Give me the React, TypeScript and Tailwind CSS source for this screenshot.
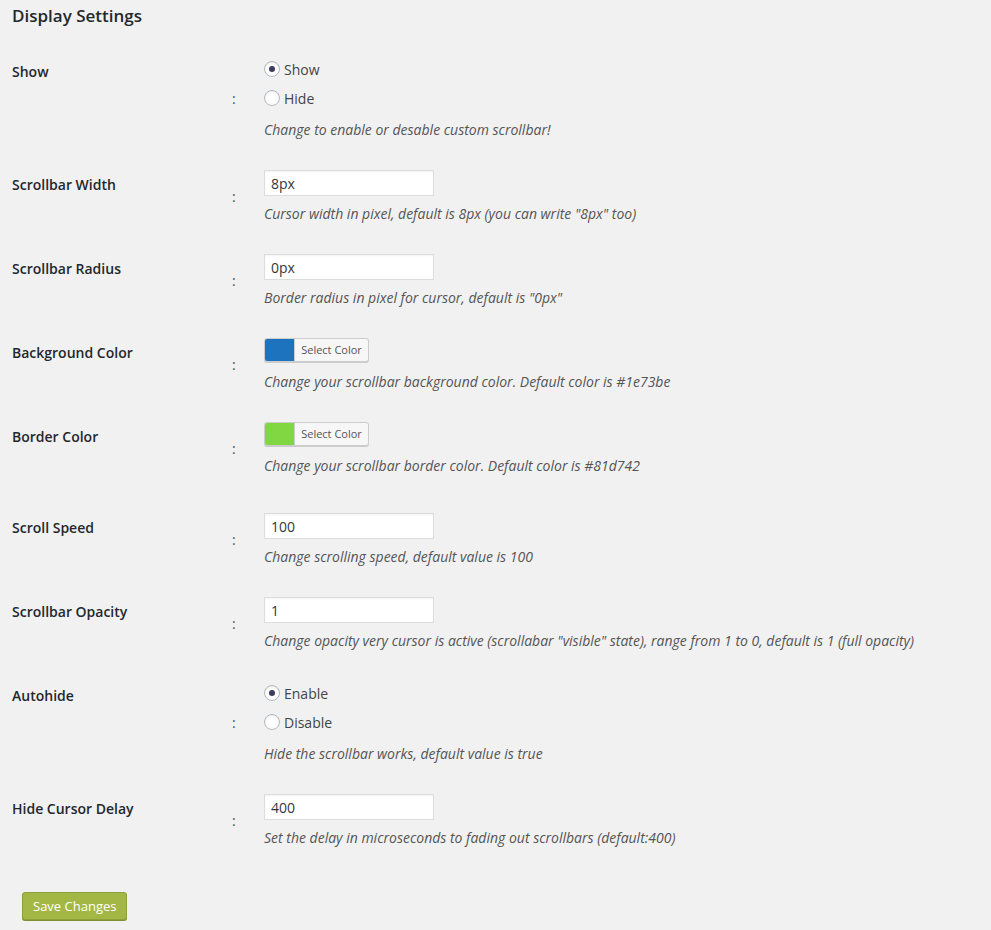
import React, { useState } from 'react';

const font = { fontFamily: '"Open Sans", "Liberation Sans", sans-serif' };

function Row({ label, children, extra = '' }: { label: string; children: React.ReactNode; extra?: string }) {
    return (
        <div className={`grid grid-cols-[210px_42px_1fr] ${extra}`}>
            <div className="pt-[20px] text-[14px] leading-[20px] font-semibold text-[#23282d]">{label}</div>
            <div className="self-center pl-[10px] text-[14px] leading-[20px] text-[#555]">:</div>
            <div className="py-[15px]">{children}</div>
        </div>
    );
}

function Desc({ children, mt }: { children: React.ReactNode; mt: string }) {
    return <p className={`${mt} text-[14px] leading-[21px] italic text-[#555]`}>{children}</p>;
}

function Radio({ checked, label, onClick }: { checked: boolean; label: string; onClick: () => void }) {
    return (
        <label onClick={onClick} className="flex h-[24px] cursor-pointer items-center gap-[4px] text-[14px] text-[#444]">
            <span className="flex h-[16px] w-[16px] items-center justify-center rounded-full border border-[#b4b9be] bg-white shadow-[inset_0_1px_2px_rgba(0,0,0,0.1)]">
                {checked && <span className="h-[6px] w-[6px] rounded-full bg-[#3f3b5c]" />}
            </span>
            {label}
        </label>
    );
}

function TextInput({ value }: { value: string }) {
    const [v, setV] = useState(value);
    return (
        <input
            value={v}
            onChange={(e) => setV(e.target.value)}
            className="block h-[26px] w-[170px] border border-[#ddd] bg-white px-[6px] text-[14px] text-[#32373c] shadow-[inset_0_1px_2px_rgba(0,0,0,0.05)] outline-none"
        />
    );
}

function ColorButton({ color }: { color: string }) {
    return (
        <button className="flex h-[24px] w-[105px] overflow-hidden rounded-[3px] border border-[#ccc] bg-[#f7f7f7] shadow-[0_1px_0_#ccc]">
            <span className="h-full w-[30px] border-r border-[#ccc]" style={{ background: color }} />
            <span className="flex-1 text-center text-[11px] leading-[22px] text-[#555]">Select Color</span>
        </button>
    );
}

export default function App() {
    const [show, setShow] = useState(true);
    const [autohide, setAutohide] = useState(true);

    return (
        <div style={font} className="min-h-[930px] w-full bg-[#f1f1f1] px-[12px]">
            <h3 className="pt-[4px] text-[17px] leading-[24px] font-semibold text-[#23282d]">Display Settings</h3>

            <div className="mt-[14px]">
                <Row label="Show">
                    <div className="flex flex-col gap-[5px]">
                        <Radio checked={show} label="Show" onClick={() => setShow(true)} />
                        <Radio checked={!show} label="Hide" onClick={() => setShow(false)} />
                    </div>
                    <Desc mt="mt-[9px]">Change to enable or desable custom scrollbar!</Desc>
                </Row>

                <Row label="Scrollbar Width">
                    <TextInput value="8px" />
                    <Desc mt="mt-[7px]">Cursor width in pixel, default is 8px (you can write "8px" too)</Desc>
                </Row>

                <Row label="Scrollbar Radius">
                    <TextInput value="0px" />
                    <Desc mt="mt-[7px]">Border radius in pixel for cursor, default is "0px"</Desc>
                </Row>

                <Row label="Background Color">
                    <ColorButton color="#1e73be" />
                    <Desc mt="mt-[9px]">Change your scrollbar background color. Default color is #1e73be</Desc>
                </Row>

                <Row label="Border Color" extra="pb-[7px]">
                    <ColorButton color="#81d742" />
                    <Desc mt="mt-[9px]">Change your scrollbar border color. Default color is #81d742</Desc>
                </Row>

                <Row label="Scroll Speed">
                    <TextInput value="100" />
                    <Desc mt="mt-[7px]">Change scrolling speed, default value is 100</Desc>
                </Row>

                <Row label="Scrollbar Opacity">
                    <TextInput value="1" />
                    <Desc mt="mt-[7px]">
                        Change opacity very cursor is active (scrollabar "visible" state), range from 1 to 0, default is 1 (full opacity)
                    </Desc>
                </Row>

                <Row label="Autohide">
                    <div className="flex flex-col gap-[5px]">
                        <Radio checked={autohide} label="Enable" onClick={() => setAutohide(true)} />
                        <Radio checked={!autohide} label="Disable" onClick={() => setAutohide(false)} />
                    </div>
                    <Desc mt="mt-[9px]">Hide the scrollbar works, default value is true</Desc>
                </Row>

                <Row label="Hide Cursor Delay">
                    <TextInput value="400" />
                    <Desc mt="mt-[7px]">Set the delay in microseconds to fading out scrollbars (default:400)</Desc>
                </Row>
            </div>

            <div className="pl-[10px] pt-[29px]">
                <button className="h-[28px] rounded-[3px] border border-[#8ea03a] bg-[#a3b745] px-[10px] text-[13px] leading-[26px] text-white shadow-[0_1px_0_#7f8f33]">
                    Save Changes
                </button>
            </div>
        </div>
    );
}
